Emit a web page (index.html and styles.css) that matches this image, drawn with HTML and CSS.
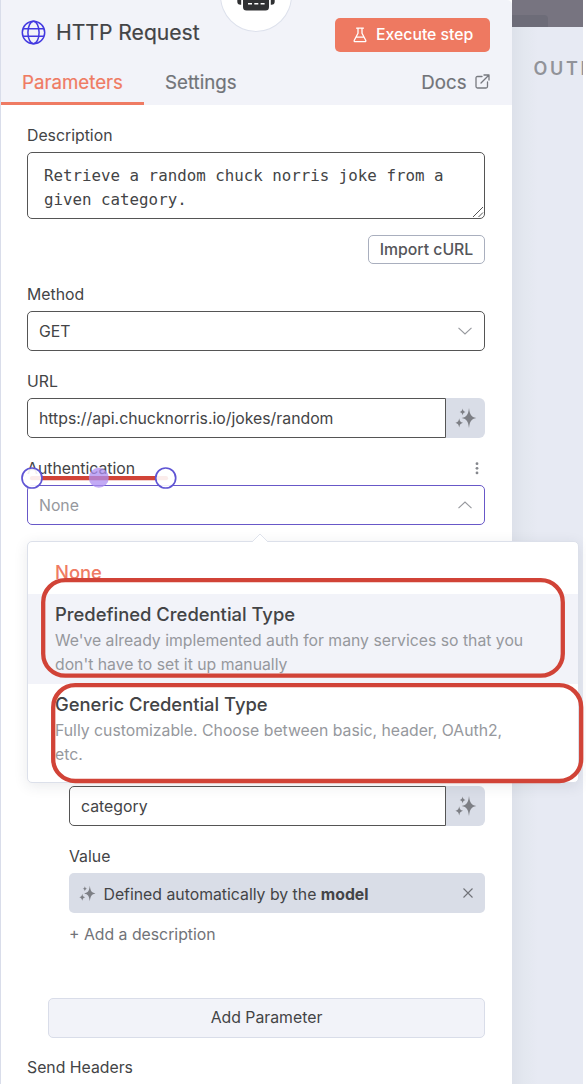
FILE: index.html
```html
<!DOCTYPE html>
<html lang="en">
<head>
<meta charset="utf-8">
<title>HTTP Request</title>
<link rel="stylesheet" href="styles.css">
</head>
<body>
<svg class="defs" width="0" height="0" aria-hidden="true">
  <symbol id="sparkles" viewBox="0 0 22 22">
    <path d="M14 1c.9 6.800 2 8.800 7.300 10-5.300 1.200-6.400 3.200-7.300 10-.9-6.800-2-8.800-7.300-10 5.300-1.200 6.400-3.200 7.300-10Z"/>
    <path d="M4.200 11.200c.6 3.100 1.200 3.800 3.800 4.600-2.600.8-3.200 1.700-3.800 4.700-.6-3-1.200-3.900-3.800-4.700 2.600-.8 3.200-1.500 3.800-4.600Z"/>
    <path d="M7.600 1.600c.5 2.300 1 2.800 2.900 3.300-1.900.5-2.400 1.100-2.900 3.300-.5-2.200-1-2.800-2.900-3.300 1.900-.5 2.400-1 2.900-3.300Z"/>
  </symbol>
</svg>
<main class="screen">
  <section class="panel">
    <header class="header">
      <div class="titlebar">
        <svg class="globe" width="25" height="25" viewBox="0 0 25 25" fill="none" stroke="#4339e0" stroke-width="1.500">
          <circle cx="12.500" cy="12.500" r="11.200"/><ellipse cx="12.500" cy="12.500" rx="5.600" ry="11.200"/><path d="M2 8.700h21M2 16.300h21"/>
        </svg>
        <h1 class="title">HTTP Request</h1>
        <button class="execute">
          <svg width="14" height="16" viewBox="0 0 14 16" fill="none" stroke="#fff" stroke-width="1.300" stroke-linecap="round" stroke-linejoin="round"><path d="M3.600 1.200h6.800M5 1.200v5L1.300 13.200q-.6 1.500 1 1.500h9.400q1.600 0 1-1.500L9 6.200v-5M3.200 10.200h7.600"/></svg>
          <span>Execute step</span>
        </button>
      </div>
      <nav class="tabs">
        <span class="tab tab-active">Parameters</span>
        <span class="tab tab-settings">Settings</span>
        <span class="docs"><span>Docs</span>
          <svg width="15" height="15" viewBox="0 0 15 15" fill="none" stroke="#77797f" stroke-width="1.300" stroke-linecap="round" stroke-linejoin="round"><path d="M9 1h5v5M14 1 6 9M7 2.500H2.500q-1.500 0-1.500 1.500v8.500q0 1.500 1.500 1.500H11q1.500 0 1.500-1.500V8"/></svg>
        </span>
      </nav>
    </header>
    <div class="body">
      <div class="label">Description</div>
      <div class="textarea">Retrieve a random chuck norris joke from a given category.
        <svg class="grip" width="12" height="12" viewBox="0 0 12 12" stroke="#555" stroke-width="1"><path d="M1 11 11 1M6.500 11 11 6.500"/></svg>
      </div>
      <div class="import-row"><button class="import">Import cURL</button></div>
      <div class="label label-method">Method</div>
      <div class="field"><span class="method">GET</span><svg width="14" height="8" viewBox="0 0 14 8" fill="none" stroke="#96989d" stroke-width="1.100"><path d="M.5.8 7 7 13.500.8"/></svg></div>
      <div class="label label-next">URL</div>
      <div class="input-group">
        <div class="field field-joined"><span class="url">https://api.chucknorris.io/jokes/random</span></div>
        <div class="ai"><svg width="22" height="22"><use href="#sparkles"/></svg></div>
      </div>
      <div class="label label-next label-auth"><span>Authentication</span><svg width="4" height="13" viewBox="0 0 4 13" fill="#85878d"><circle cx="2" cy="1.700" r="1.400"/><circle cx="2" cy="6.300" r="1.400"/><circle cx="2" cy="10.900" r="1.400"/></svg></div>
      <div class="field field-open"><span>None</span><svg width="14" height="8" viewBox="0 0 14 8" fill="none" stroke="#96989d" stroke-width="1.100"><path d="M.5 7.200 7 1 13.500 7.200"/></svg></div>
      <div class="nested">
        <div class="input-group">
          <div class="field field-joined"><span class="category">category</span></div>
          <div class="ai"><svg width="22" height="22"><use href="#sparkles"/></svg></div>
        </div>
        <div class="label label-next">Value</div>
        <div class="auto">
          <svg width="17" height="17"><use href="#sparkles"/></svg>
          <span class="auto-text">Defined automatically by the <b>model</b></span>
          <svg class="close" width="10" height="10" viewBox="0 0 10 10" stroke="#707278" stroke-width="1.100"><path d="m.5.5 9 9M9.500.5l-9 9"/></svg>
        </div>
        <div class="add-description">+ Add a description</div>
      </div>
      <button class="add-parameter">Add Parameter</button>
      <div class="label label-headers">Send Headers</div>
    </div>
  </section>
  <aside class="output">
    <div class="canvas-strip"><div class="canvas-tab"></div></div>
    <h2 class="output-title">OUTPUT</h2>
  </aside>

  <div class="node-badge">
    <svg width="38" height="12" viewBox="0 0 38 12"><path fill="#303133" d="M6 0h26v7q0 3.500-3.500 3.500h-19Q6 10.500 6 7ZM.3 0h3.900v4.800H3.500Q.3 4.800.3 1.500ZM33.800 0h3.900v1.500q0 3.300-3.200 3.300h-.7Z"/><path stroke="#fff" stroke-width="1.500" stroke-dasharray="4 2.300" d="M11 3.700h17"/></svg>
  </div>

  <div class="dropdown">
    <svg class="arrow" width="18" height="10" viewBox="0 0 18 10"><path fill="#fff" d="M0 10 9 1l9 9Z"/><path fill="none" stroke="#dfe3ec" d="M1 9 9 1l8 8"/></svg>
    <div class="option option-none">None</div>
    <div class="option option-hover"><div class="option-title predefined">Predefined Credential Type</div><p class="option-text">We've already implemented auth for many services so that you<br>don't have to set it up manually</p></div>
    <div class="option option-generic"><div class="option-title generic">Generic Credential Type</div><p class="option-text">Fully customizable. Choose between basic, header, OAuth2,<br>etc.</p></div>
  </div>

  <svg class="annotations" width="586" height="1084" viewBox="0 0 586 1084" fill="none">
    <g stroke="#d14337" stroke-width="4.300">
      <rect x="43.200" y="580.200" width="519.600" height="95.500" rx="22"/>
      <rect x="53.200" y="685.200" width="528" height="95.800" rx="22"/>
      <path d="M32 478.200h134" stroke-linecap="round"/>
    </g>
    <circle cx="98.800" cy="477.800" r="10" fill="#ad8df2" fill-opacity=".75"/>
    <g fill="#fff" fill-opacity=".9" stroke="#5f55d4" stroke-width="1.700"><circle cx="32" cy="478" r="10"/><circle cx="165.700" cy="478" r="10"/></g>
  </svg>
</main>
</body>
</html>
```
FILE: styles.css
```css
* { box-sizing: border-box; }
body { margin: 0; background: #fff; font-family: Inter, sans-serif; font-size: 15.8px; color: #434446; }
button { font: inherit; color: inherit; margin: 0; padding: 0; }
.defs { position: absolute; }
.screen { position: relative; display: flex; width: 586px; height: 1084px; overflow: hidden; background: #fff; }
.panel { width: 511.500px; height: 1084px; background: #fff; border-left: 1px solid #d9ddea; flex: none; }
.output { width: 71.500px; background: linear-gradient(90deg, #dde1ea 0, #e3e7ef 12px, #e7eaf3 26px); overflow: hidden; }

.header { height: 105px; background: #f2f3f9; border-top-right-radius: 5px; }
.titlebar { display: flex; align-items: center; height: 60px; padding: 9px 21.500px 0 20px; }
.globe { margin-top: -4px; }
.title { margin: -5px auto 0 10px; font-size: 21.1px; font-weight: 400; -webkit-text-stroke: .2px; }
.execute { display: flex; align-items: center; gap: 9px; width: 155px; height: 34px; padding-left: 18px; border: 0; border-radius: 5px; background: #ee7961; color: #fff; font-weight: 500; }
.tabs { display: flex; align-items: stretch; height: 45px; font-size: 18.7px; color: #717378; -webkit-text-stroke: .2px; }
.tab { line-height: 46px; }
.tab-active { width: 142.500px; padding-left: 21px; color: #ef7b63; border-bottom: 3px solid #ef7b63; }
.tab-settings { padding-left: 21.500px; }
.docs { display: flex; align-items: center; gap: 8px; margin: 0 22px 0 auto; height: 44px; }
.docs svg { margin-top: -2px; }

.body { padding: 20px 26.500px 0 26px; }
.label { height: 20px; margin-bottom: 7px; line-height: 22px; }
.textarea { position: relative; height: 67px; padding: 11px 16px; border: 1.500px solid #555; border-radius: 5px; font: 15.8px/24px "DejaVu Sans Mono", monospace; }
.grip { position: absolute; right: 0; bottom: 0; }
.import-row { display: flex; justify-content: flex-end; margin-top: 16px; }
.import { width: 117px; height: 29px; border: 1.500px solid #a9afbe; border-radius: 5px; background: #fff; font-weight: 500; color: #55565a; }
.label-method { margin-top: 20px; }
.field { display: flex; align-items: center; justify-content: space-between; height: 40px; padding: 0 12px 0 11px; border: 1px solid #555; border-radius: 5px; background: #fff; }
.label-next { margin-top: 20px; }
.input-group { display: flex; }
.field-joined { flex: 1; border-radius: 5px 0 0 5px; }
.ai { display: flex; align-items: center; justify-content: center; width: 39px; height: 40px; border-radius: 0 6px 6px 0; background: #d9dde7; }
.ai svg, .auto svg { fill: #7d7f85; }
.label-auth { display: flex; justify-content: space-between; align-items: center; padding-right: 6px; }
.label-auth span { padding-top: 1px; }
.field-open { border-color: #6858c8; color: #96989d; }
.nested { margin: 261px 0 0 42px; }
.auto { display: flex; align-items: center; height: 40px; padding: 0 12px 0 10px; border-radius: 5px; background: #d9dde7; }
.auto-text { margin: 2px auto 0 7.500px; }
.auto b { font-weight: 700; }
.add-description { height: 20px; margin-top: 11px; line-height: 22px; color: #717378; }
.add-parameter { display: block; width: 437px; height: 40px; margin: 54px 0 0 21px; padding-bottom: 2px; border: 1.500px solid #d9dde9; border-radius: 5px; background: #f2f3f9; }
.label-headers { margin-top: 19px; }

.canvas-strip { height: 27px; padding-top: 15px; background: #777480; }
.canvas-tab { width: 36px; height: 12px; background: #6d6c78; border-top-right-radius: 4px; }
.output-title { margin: 29px 0 0 22px; font-size: 18px; line-height: 25px; font-weight: 600; letter-spacing: 2.700px; color: #919399; }

.node-badge { position: absolute; left: 220px; top: -41px; width: 72px; height: 73px; border-radius: 50%; border: 1px solid #dde1ec; background: #fff; padding: 40px 0 0 16px; }
.node-badge svg { display: block; }

.dropdown { position: absolute; left: 27px; top: 541px; width: 552px; height: 242px; border: 1px solid #dce0ea; border-radius: 5px; background: #fff; box-shadow: 0 3px 14px rgba(40, 45, 65, .1); }
.arrow { position: absolute; left: 223px; top: -9px; }
.option { padding-left: 27px; }
.option-none { height: 52px; padding-top: 18px; font-size: 18.400px; line-height: 24px; font-weight: 500; color: #ef7b63; }
.option-hover { height: 90px; background: #f2f3f9; padding-top: 8px; }
.option-generic { padding-top: 8px; }
.option-title { font-size: 18.400px; font-weight: 500; line-height: 24px; }
.option-text { margin: 3px 0 0; font-size: 15.770px; line-height: 24px; color: #96989d; white-space: nowrap; }
.annotations { position: absolute; left: 0; top: 0; }
```
